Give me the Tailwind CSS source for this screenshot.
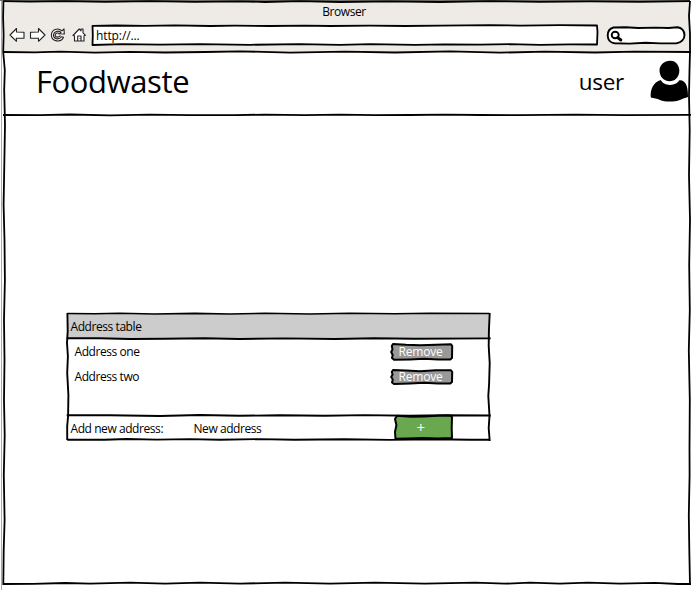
<!DOCTYPE html>
<html lang="en">
<head>
<meta charset="utf-8">
<title>Foodwaste</title>
<script src="https://cdn.jsdelivr.net/npm/@tailwindcss/browser@4"></script>
</head>
<body class="bg-white">
<div class="relative flex h-[590px] w-[695px] flex-col overflow-hidden bg-white pl-[3px] pr-[5px] pt-px font-['Open_Sans',sans-serif] text-[12px] tracking-[-0.43px] text-black">
  <!-- browser chrome -->
  <div class="flex h-[51px] flex-col bg-[#eeebe7]">
    <div class="h-[22px] pr-[5px] text-center leading-[22px]">Browser</div>
    <div class="flex h-[24px] items-center pl-[6px]">
      <svg class="h-[16px] w-[79px] shrink-0" viewBox="0 0 79 16" fill="#fff" stroke="#222" stroke-width="1.1" stroke-linejoin="round">
        <path d="M1 8 L7.5 1.5 L7.5 5 L15 5.2 L15 11.3 L7.3 11.2 L7.5 14.3 Z"/>
        <path d="M36 8 L29.5 1.5 L29.5 5 L21.5 5.2 L21.5 11.3 L29.5 11.2 L29.5 14.3 Z"/>
        <path d="M53 3.8 L55 1.8 L55.3 7 L50.2 6.8 L52 5.3 C49 2.8 44.7 4.5 44.4 8 C44.4 12 50 13.4 52.4 9.8 L54.5 10.3 C52.2 15.8 42.8 15 42.4 8.3 C42.3 2.3 49 .2 53 3.8 Z"/>
        <path d="M51.5 8.7 C48 11.8 45.2 9.2 46.5 7 C48 5 50 6.4 50.3 7" fill="none"/>
        <path d="M64 8.5 L70.2 2 L72 3.8 L72 2 L74 2 L74 5.8 L76.5 8.3 L75 8.8 L75 14 L65.5 14 L65.5 8.7 Z"/>
        <path d="M68.7 14 L68.7 9 L72 9 L72 14 M70.8 11.5 v.6" fill="none"/>
      </svg>
      <div class="relative ml-[4px] h-[20px] w-[506px] shrink-0 bg-white pl-[4px] pt-px text-[12px] leading-[19px] tracking-[-0.1px]">http://...
        <svg class="absolute -inset-[2px] h-[24px] w-[510px]" viewBox="0 0 510 24" fill="none" stroke="#000" stroke-width="1.8" stroke-linejoin="round">
          <path d="M2.5 2.8 L26 2.5 L55 2.8 L85 2.3 L120 3 L145 2.7 L180 3 L215 2.6 L240 3 L280 2.6 L315 3 L350 2.7 L400 2.2 L430 2.6 L470 2.2 L507 2.5 L507.5 9 L507 21.5 L480 21.4 L450 21.8 L420 21.2 L390 21.7 L355 21.3 L325 21.8 L280 21.2 L250 21.8 L210 21.1 L160 21.8 L110 21.2 L70 21.7 L32 21.2 L2.5 22 L2.8 12 Z"/>
        </svg>
      </div>
      <svg class="ml-[8px] h-[20px] w-[81px] shrink-0" viewBox="0.5 0 81 20" fill="none" stroke="#000" stroke-width="1.9" stroke-linejoin="round">
        <path fill="#fff" d="M8 2.5 L20 2.2 L33 3 L50 2.6 L63 3 L72 2.2 C76 2.5 79 6 79 10 C79 14 76 17.8 71 18.2 L55 18.4 L40 17.8 L24 18.6 L9 18.2 C5 18 2.3 15 2.2 10.5 C2.2 7 4 3.5 8 2.5 Z"/>
        <ellipse cx="9.7" cy="10" rx="3.5" ry="3.3"/>
        <path d="M12.2 12.6 L15.3 15" stroke-width="3" stroke-linecap="round"/>
      </svg>
    </div>
  </div>
  <!-- site header -->
  <header class="flex h-[63px] items-center justify-between pl-[33px]">
    <h1 class="pb-[5px] text-[31px] leading-[44px] tracking-[-0.4px]">Foodwaste</h1>
    <div class="flex items-center">
      <span class="pb-[3px] pr-[26px] text-[22.5px] leading-[32px] tracking-[-0.3px]">user</span>
      <svg class="mb-[6px] h-[42px] w-[40px]" viewBox="0 0 40 42">
        <path d="M12 15 C15 14 16 12 20 12 C25 12 27 15 28 20 L32 20.5 C37 22.5 38 29 38 37 C35 38 33 38.5 30 40 C24 42 15 42 10 40 C7 38.5 4 38.5 .8 37.5 C0 30 3 22 11 20 Z"/>
        <path d="M10 18 C12 27 27 27 30 19 L20 12 Z" fill="#fff"/>
        <path d="M20 .8 C25 .5 28 4 29 8 C30.5 14 27 21 20 21.2 C13 21.2 9.5 16 9.5 10 C9.8 5 14 1 20 .8 Z"/>
      </svg>
    </div>
  </header>
  <!-- content -->
  <main class="pl-[64px] pt-[199px]">
    <section class="relative h-[126px] w-[423px]">
      <div class="h-[25px] bg-[#cccccc] pl-[3.5px] leading-[25px]">Address table</div>
      <div class="flex h-[25px] items-center justify-between pl-[7.5px] pr-[36px]">
        <span>Address one</span>
        <button class="relative flex h-[19px] w-[64px] items-center justify-center pr-[3px] text-[12px] tracking-[-0.2px] text-white">
          <svg class="absolute inset-0 h-[19px] w-[64px]" viewBox="0 0 64 19" fill="#999" stroke="#000" stroke-width="2" stroke-linejoin="round"><path d="M3 2 L16 2.8 L30 3.2 L46 2.8 L61 2.2 L62.2 4 L62 16 L60 17.6 L48 17.4 L34 16.8 L20 17.4 L4 17.8 L2 16 L2.7 13 L1.2 10 L2.5 7.5 L1.8 4 Z"/></svg>
          <span class="relative">Remove</span>
        </button>
      </div>
      <div class="flex h-[25px] items-center justify-between pl-[7.5px] pr-[36px]">
        <span>Address two</span>
        <button class="relative flex h-[19px] w-[64px] items-center justify-center pr-[3px] text-[12px] tracking-[-0.2px] text-white">
          <svg class="absolute inset-0 h-[19px] w-[64px]" viewBox="0 0 64 19" fill="#999" stroke="#000" stroke-width="2" stroke-linejoin="round"><path d="M3 3 L16 3.5 L30 4.2 L46 3.2 L61 3.2 L62.2 5 L62 15 L60 16.6 L48 16.4 L34 15.8 L20 16.4 L4 17 L2 15.5 L2.8 12.5 L1.2 10 L2.6 7.5 L1.8 5 Z"/></svg>
          <span class="relative">Remove</span>
        </button>
      </div>
      <div class="h-[26px]"></div>
      <div class="flex h-[24px] items-center pl-[3.5px]">
        <span class="w-[123px] pt-[3px]">Add new address:</span>
        <span class="w-[199.5px] pt-[3px]">New address</span>
        <button class="relative z-10 flex h-[26px] w-[61px] items-center justify-center pr-[6px] pt-px text-[15px] text-white">
          <svg class="absolute inset-0 h-[26px] w-[61px]" viewBox="0 0 61 26" fill="#6aa84f" stroke="#000" stroke-width="2" stroke-linejoin="round"><path d="M4 1.8 L18 2.8 L31 2.5 L45 1.8 L57 1.5 L59 3 L58.7 14 L59 24 L45 24.4 L30 24.1 L15 24.6 L2.5 24.8 L2 18 L3.4 11 L2 5 Z"/></svg>
          <span class="relative">+</span>
        </button>
      </div>
      <svg class="absolute -left-[2px] -top-[3px] h-[132px] w-[429px]" viewBox="0.3 0 429 132" fill="none" stroke="#000" stroke-width="1.9">
        <path d="M2.5 2.5 L30 2.7 L55 2.2 L90 3 L130 2.4 L165 3 L200 2.3 L245 3 L285 2.3 L330 2.8 L365 2.2 L425 2.5" stroke-width="1.6"/>
        <path d="M2 27.2 L35 27.2 L65 28 L100 27.8 L140 27.3 L175 28 L220 27.4 L270 28 L310 27.3 L350 27.8 L426 27.4"/>
        <path d="M2 104.2 L45 104.3 L95 105 L135 104 L175 104.8 L215 104.2 L260 104.8 L300 104.1 L345 104.8 L380 104.2 L426 104.5"/>
        <path d="M2.5 128.8 L40 128.8 L62 128 L92 128.6 L125 128.1 L155 128.7 L195 128.1 L230 128.8 L280 128.2 L325 128.9 L370 128.2 L405 128.8 L425 128.8"/>
        <path d="M2.7 2 L3 20 L2.3 32 L3.2 45 L2.5 62 L3.7 84 L3.4 105 L2.5 115 L2.5 129 M425 2 L424.2 20 L424 35 L425 52 L424.4 73 L423.6 85 L424.8 105 L424 117 L425 130"/>
      </svg>
    </section>
  </main>
  <!-- sketched window outline and dividers -->
  <svg class="pointer-events-none absolute inset-0 h-[590px] w-[695px]" viewBox="0 0 695 590" fill="none" stroke="#000" stroke-width="1.8">
    <path d="M1.5 0 V590" stroke="#aaa" stroke-width="1"/>
    <path d="M0 .5 H690" stroke="#77776f" stroke-width="1"/>
    <path d="M3 1.2 L30 1.6 L65 1.2 L105 1.8 L150 1.2 L195 1.9 L240 1.3 L265 2 L300 1.2 L340 2 L390 1.3 L440 2 L490 1.2 L540 1.8 L590 1.3 L640 1.9 L690 1.2"/>
    <path d="M3 52 L35 52.4 L60 51.6 L95 52.6 L130 51.8 L165 52.5 L205 52 L240 51.3 L290 52.7 L345 51.7 L395 52.5 L450 51.3 L500 52.7 L545 51.6 L595 52.5 L635 51.6 L691 52"/>
    <path d="M3 115 L40 115.2 L70 114.5 L110 115.3 L150 114.6 L190 115.2 L235 115.1 L265 114.6 L305 115.2 L340 114.6 L375 115.2 L410 115 L445 114.6 L480 115 L520 115.2 L575 114.6 L625 115.2 L691 114.8"/>
    <path d="M3 584 L33 583.8 L65 583 L90 583.7 L130 582.6 L165 583.7 L200 582.6 L240 583.6 L285 582.6 L330 583.7 L375 582.7 L425 583.6 L475 582.6 L505 583.7 L530 582.6 L560 583.7 L588 582.6 L620 583.7 L655 582.8 L678 584 L691 584"/>
    <path d="M3.4 1 L3.1 18 L3.6 35 L3.2 52 L4.8 70 L4.2 90 L5 125 L4.3 165 L3.6 205 L4.5 240 L4.9 280 L4 320 L4.5 360 L4 400 L4.7 435 L3.8 475 L4.6 520 L3.7 550 L3.3 585"/>
    <path d="M690 1 L689 16 L690 34 L690 52 L689.5 70 L689 95 L689.7 130 L689 175 L690 220 L689.2 265 L689.8 310 L688.8 350 L689.8 400 L689.5 450 L689.6 475 L688.8 515 L689.3 550 L690 585"/>
  </svg>
</div>
</body>
</html>
